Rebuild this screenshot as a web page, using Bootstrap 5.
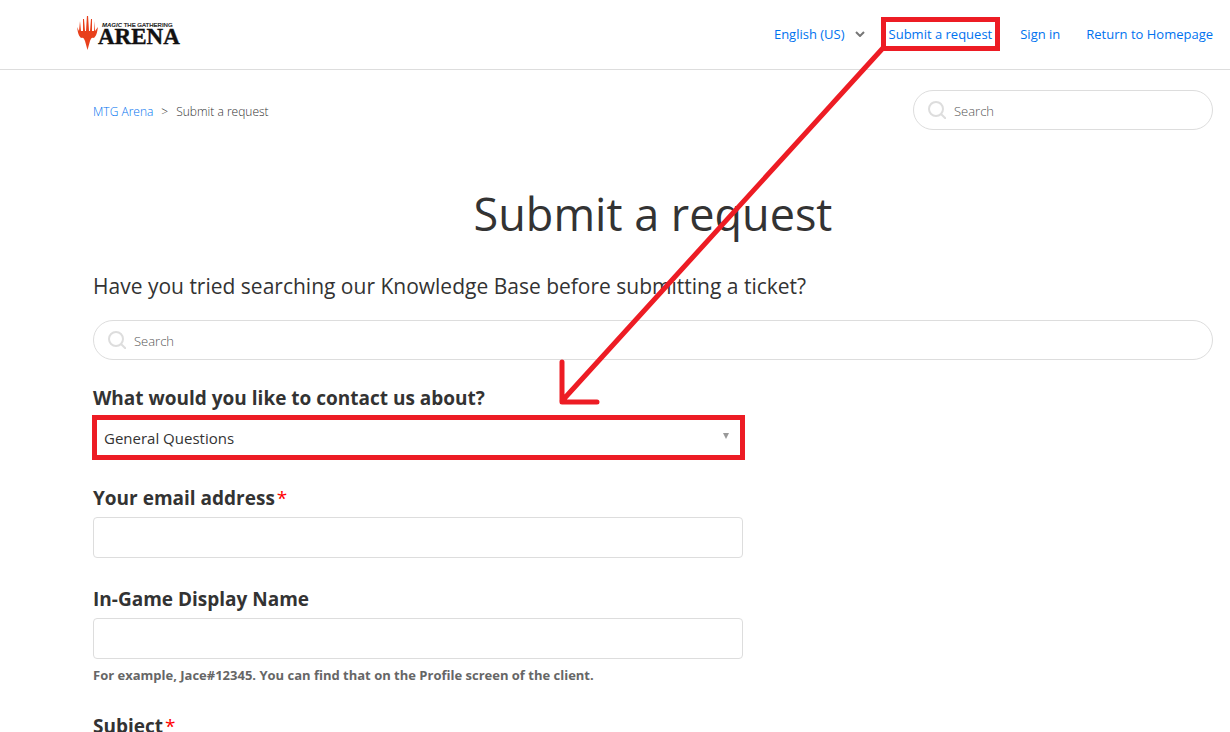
<!DOCTYPE html>
<html lang="en-US">
<head>
<meta charset="utf-8">
<meta name="viewport" content="width=device-width, initial-scale=1">
<title>Submit a request</title>
<link href="https://cdn.jsdelivr.net/npm/bootstrap@5.3.0/dist/css/bootstrap.min.css" rel="stylesheet">
<style>
  :root { --ink: #333; --line: #ddd; --mark-red: #ed1c24; }
  body { font-family: "Open Sans", "Noto Sans", sans-serif; font-size: 13px; line-height: 20px; color: var(--ink); background: #fff; overflow-x: hidden; }
  a { color: #0072ef; text-decoration: none; }
  .site-header { height: 70px; padding: 0 17px 2px 77px; border-bottom: 1px solid var(--line); }
  .site-nav { gap: 16px; }
  .site-nav a + a { margin-left: 4px; }
  .site-nav a:last-child { margin-left: 10px; }
  .lang-btn { color: #0072ef; font-size: 13px; line-height: 20px; gap: 10px; }
  .boxed { border: 5px solid var(--mark-red); }
  .nav-boxed { padding: 2px 3px; }
  .page-main { padding: 20px 17px 0 93px; }
  .crumbs { font-size: 12px; font-weight: 300; padding-top: 4px; --bs-breadcrumb-divider: ">"; --bs-breadcrumb-margin-bottom: 0; --bs-breadcrumb-divider-color: #333; --bs-breadcrumb-item-active-color: #333; }
  .pill { height: 40px; border: 1px solid var(--line); border-radius: 20px; padding: 2px 14px 0; gap: 8px; }
  .pill svg { margin-bottom: 2px; }
  .pill input { font-size: 13px; font-weight: 300; line-height: 20px; outline: 0; color: var(--ink); }
  .pill input::placeholder { color: #555; opacity: 1; }
  .crumb-search { width: 300px; }
  .page-title { font-size: 45px; line-height: 60px; font-weight: 400; margin: 54px 0 0; }
  .lead-in { font-size: 21px; line-height: 32px; font-weight: 400; margin: 26px 0 18px; }
  .request-form { width: 58%; padding-top: 24px; }
  .field { margin-bottom: 27px; }
  .field-label { font-size: 19px; line-height: 28px; font-weight: 700; margin-bottom: 5px; }
  .must { color: #f00; font-weight: 400; margin-left: 2px; }
  .box-input { height: 41px; border: 1px solid var(--line); border-radius: 4px; padding: 0 10px; font-size: 15px; }
  .pick { position: relative; margin: -2px -2px -3px -1px; }
  .pick select { height: 45px; border-radius: 0; appearance: none; padding: 0 7px; font-size: 15px; background: #fff; color: var(--ink); }
  .pick svg { position: absolute; right: 16px; top: 18px; pointer-events: none; }
  .hint { font-size: 13px; line-height: 20px; font-weight: 700; color: #666; margin: 6px 0 0; }
  .arrow-note { position: absolute; left: 0; top: 0; pointer-events: none; }
</style>
</head>
<body>
<header class="site-header d-flex align-items-center justify-content-between">
  <a href="#" aria-label="Magic The Gathering Arena">
    <svg class="d-block" width="104" height="36" viewBox="0 0 104 36">
      <path fill="#e8401c" d="M0 11 L2 15 L3 5 L4 15 L6 15 L6 3 L7 3 L8 15 L9 15 L10 -1 L11 -1 L12 15 L13 15 L14 3 L15 3 L15 15 L17 15 L18 5 L18 15 L21 11 C20 16 20 19 17 22 C15 21 14 22 13 25 L10.5 34 L8 25 C7 22 6 21 4 22 C1 19 1 16 0 11Z"/>
      <text x="25" y="11" font-family="Liberation Sans, sans-serif" font-size="6" font-weight="700" fill="#111"><tspan font-style="italic">MAGIC</tspan> <tspan font-weight="400" stroke="#111" stroke-width=".2">THE GATHERING</tspan></text>
      <text x="21" y="28" font-family="Liberation Serif, serif" font-size="23" font-weight="700" fill="#111" stroke="#111" stroke-width=".4">ARENA</text>
    </svg>
  </a>
  <nav class="site-nav d-flex align-items-center">
    <button type="button" class="lang-btn btn p-0 border-0 d-flex align-items-center">English (US)
      <svg width="10" height="6" viewBox="0 0 10 6" fill="none" stroke="#777" stroke-width="2"><path d="M1 1l4 4 4-4"/></svg>
    </button>
    <a href="#" class="boxed nav-boxed">Submit a request</a>
    <a href="#">Sign in</a>
    <a href="#">Return to Homepage</a>
  </nav>
</header>
<main class="page-main">
  <div class="d-flex align-items-center justify-content-between">
    <nav aria-label="breadcrumb">
      <ol class="breadcrumb crumbs">
        <li class="breadcrumb-item"><a href="#">MTG Arena</a></li>
        <li class="breadcrumb-item active" aria-current="page">Submit a request</li>
      </ol>
    </nav>
    <form class="pill crumb-search d-flex align-items-center" role="search">
      <svg width="18" height="18" viewBox="0 0 18 18" fill="none" stroke="#ddd" stroke-width="2"><circle cx="8" cy="8" r="7"/><path d="M13 13l5 5"/></svg>
      <input class="border-0 p-0 flex-grow-1 bg-transparent" type="search" placeholder="Search" aria-label="Search">
    </form>
  </div>
  <h1 class="page-title text-center">Submit a request</h1>
  <h2 class="lead-in">Have you tried searching our Knowledge Base before submitting a ticket?</h2>
  <form class="pill d-flex align-items-center" role="search">
    <svg width="18" height="18" viewBox="0 0 18 18" fill="none" stroke="#ddd" stroke-width="2"><circle cx="8" cy="8" r="7"/><path d="M13 13l5 5"/></svg>
    <input class="border-0 p-0 flex-grow-1 bg-transparent" type="search" placeholder="Search" aria-label="Search the Knowledge Base">
  </form>
  <form class="request-form">
    <div class="field">
      <label class="field-label d-block" for="topic">What would you like to contact us about?</label>
      <div class="pick">
        <select id="topic" class="boxed w-100 d-block"><option>General Questions</option></select>
        <svg width="6" height="6" viewBox="0 0 6 6" fill="#999"><path d="M0 0h6L3 6z"/></svg>
      </div>
    </div>
    <div class="field">
      <label class="field-label d-block" for="email">Your email address<span class="must">*</span></label>
      <input id="email" type="email" class="box-input w-100 d-block" required>
    </div>
    <div class="field">
      <label class="field-label d-block" for="display-name">In-Game Display Name</label>
      <input id="display-name" type="text" class="box-input w-100 d-block">
      <p class="hint">For example, Jace#12345. You can find that on the Profile screen of the client.</p>
    </div>
    <div class="field">
      <label class="field-label d-block" for="subject">Subject<span class="must">*</span></label>
      <input id="subject" type="text" class="box-input w-100 d-block" required>
    </div>
  </form>
</main>
<svg class="arrow-note" width="900" height="410" viewBox="0 0 900 410" fill="none" stroke="#ed1c24" stroke-width="5" stroke-linecap="round" stroke-linejoin="round" aria-hidden="true"><path d="M883 48L562 401M562 362V402H597"/></svg>
<script src="https://cdn.jsdelivr.net/npm/bootstrap@5.3.0/dist/js/bootstrap.bundle.min.js"></script>
</body>
</html>
